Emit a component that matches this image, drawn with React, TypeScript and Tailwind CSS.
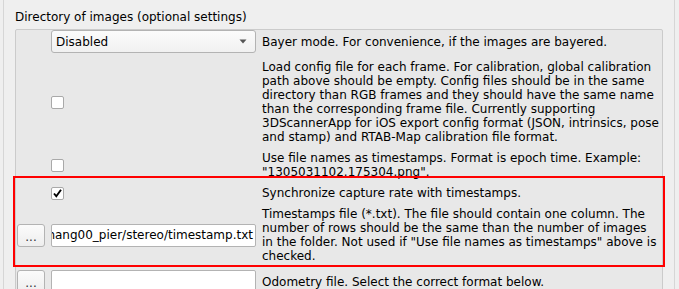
import React from "react";

const Check = ({ checked }: { checked?: boolean }) => (
  <div className="w-[13px] h-[13px] rounded-[2px] border border-[#a9a9a9] bg-white flex items-center justify-center">
    {checked && (
      <svg width="11" height="11" viewBox="0 0 11 11">
        <path d="M2 5.5 L4.3 8.3 L9 1.8" fill="none" stroke="#000" strokeWidth="1.9" />
      </svg>
    )}
  </div>
);

const DotsButton = () => (
  <div className="w-[28px] h-[23px] rounded-[3px] border border-[#b3b3b3] bg-gradient-to-b from-[#fbfbfb] to-[#eeeeee] flex items-center justify-center text-[12px] leading-none text-[#333] pt-[3px]">
    ...
  </div>
);

export default function App() {
  const lines = (arr: string[]) => (
    <div className="text-[12px] leading-[14px] whitespace-nowrap text-black">
      {arr.map((l, i) => (
        <div key={i}>{l}</div>
      ))}
    </div>
  );
  return (
    <div
      className="relative w-[679px] h-[289px] overflow-hidden bg-[#efefef]"
      style={{ fontFamily: '"DejaVu Sans", sans-serif' }}
    >
      <div className="ml-[3px] w-[672px] h-[289px] border-l border-r border-[#d6d6d6] pl-[11px] pt-[10px]">
        <div className="text-[12px] leading-[14px] text-black whitespace-nowrap">
          Directory of images (optional settings)
        </div>
        <div className="mt-[5px] w-[648px] h-[300px] border border-[#cbcbcb] rounded-tr-[2px] rounded-tl-[2px] bg-[#e8e8e8] pl-[1px]">
          <div className="grid grid-cols-[28px_205px_1fr] gap-x-[6px] gap-y-[7px] items-center">
            {/* Row 1 */}
            <div />
            <div className="h-[23px] rounded-[3px] border border-[#b3b3b3] bg-gradient-to-b from-[#fbfbfb] to-[#f1f1f1] flex items-center justify-between pl-[4px] pr-[8px] text-[12px] text-black">
              <span>Disabled</span>
              <svg width="8" height="5" viewBox="0 0 8 5">
                <path d="M0.5 0.5 L7.5 0.5 L4 4.5 Z" fill="#555" />
              </svg>
            </div>
            {lines(["Bayer mode. For convenience, if the images are bayered."])}

            {/* Row 2 */}
            <div />
            <div>
              <Check />
            </div>
            {lines([
              "Load config file for each frame. For calibration, global calibration",
              "path above should be empty. Config files should be in the same",
              "directory than RGB frames and they should have the same name",
              "than the corresponding frame file. Currently supporting",
              "3DScannerApp for iOS export config format (JSON, intrinsics, pose",
              "and stamp) and RTAB-Map calibration file format.",
            ])}

            {/* Row 3 */}
            <div />
            <div>
              <Check />
            </div>
            {lines([
              "Use file names as timestamps. Format is epoch time. Example:",
              "\"1305031102.175304.png\".",
            ])}

            {/* Row 4 */}
            <div />
            <div>
              <Check checked />
            </div>
            {lines(["Synchronize capture rate with timestamps."])}

            {/* Row 5 */}
            <DotsButton />
            <div className="h-[23px] rounded-[2px] border border-[#b3b3b3] bg-white overflow-hidden flex justify-end items-center pr-[2px] text-[12px] text-black whitespace-nowrap">
              <span>zhang00_pier/stereo/timestamp.txt</span>
            </div>
            {lines([
              "Timestamps file (*.txt). The file should contain one column. The",
              "number of rows should be the same than the number of images",
              "in the folder. Not used if \"Use file names as timestamps\" above is",
              "checked.",
            ])}

            {/* Row 6 */}
            <DotsButton />
            <div className="h-[23px] rounded-[2px] border border-[#b3b3b3] bg-white" />
            {lines(["Odometry file. Select the correct format below."])}
          </div>
        </div>
      </div>
      <div className="absolute left-[13px] top-[176px] w-[652px] h-[91px] border-2 border-[#ff0000]" />
    </div>
  );
}
